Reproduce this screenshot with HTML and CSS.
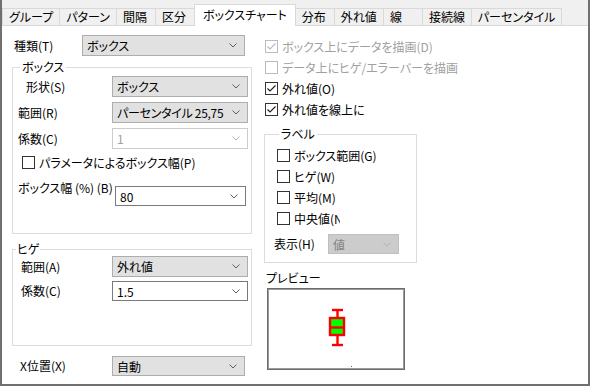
FILE: index.html
```html
<!DOCTYPE html>
<html lang="ja">
<head>
    <meta charset="UTF-8">
    <title>ボックスチャート</title>
    <link rel="stylesheet" href="styles.css">
</head>
<body>
<div class="window">
    <div class="tabs">
        <div class="tab">グループ</div>
        <div class="tab">パターン</div>
        <div class="tab">間隔</div>
        <div class="tab">区分</div>
        <div class="tab active">ボックスチャート</div>
        <div class="tab">分布</div>
        <div class="tab">外れ値</div>
        <div class="tab">線</div>
        <div class="tab">接続線</div>
        <div class="tab">パーセンタイル</div>
    </div>
    <div class="panel">
        <div class="col-left">
            <div class="row row-kind">
                <span class="label label-kind">種類(T)</span>
                <div class="combo combo-kind">
                    <span>ボックス</span>
                    <svg class="chev" width="8" height="5" viewBox="0 0 8 5"><path d="M0.5 0.5 L4 4 L7.5 0.5"/></svg>
                </div>
            </div>

            <fieldset class="group group-box">
                <legend>ボックス</legend>
                <div class="row first">
                    <span class="label label-box indent">形状(S)</span>
                    <div class="combo combo-wide">
                        <span>ボックス</span>
                        <svg class="chev" width="8" height="5" viewBox="0 0 8 5"><path d="M0.5 0.5 L4 4 L7.5 0.5"/></svg>
                    </div>
                </div>
                <div class="row">
                    <span class="label label-box">範囲(R)</span>
                    <div class="combo combo-wide">
                        <span class="narrow">パーセンタイル 25,75</span>
                        <svg class="chev" width="8" height="5" viewBox="0 0 8 5"><path d="M0.5 0.5 L4 4 L7.5 0.5"/></svg>
                    </div>
                </div>
                <div class="row">
                    <span class="label label-box">係数(C)</span>
                    <div class="combo combo-wide disabled-edit">
                        <span>1</span>
                        <svg class="chev" width="8" height="5" viewBox="0 0 8 5"><path d="M0.5 0.5 L4 4 L7.5 0.5"/></svg>
                    </div>
                </div>
                <div class="check-row check-param">
                    <span class="check"></span>
                    <span>パラメータによるボックス幅(P)</span>
                </div>
                <div class="row row-width">
                    <span class="label label-width">ボックス幅 (%) (B)</span>
                    <div class="combo edit combo-width">
                        <span>80</span>
                        <svg class="chev" width="8" height="5" viewBox="0 0 8 5"><path d="M0.5 0.5 L4 4 L7.5 0.5"/></svg>
                    </div>
                </div>
            </fieldset>

            <fieldset class="group group-whisker">
                <legend>ヒゲ</legend>
                <div class="row first">
                    <span class="label label-whisker">範囲(A)</span>
                    <div class="combo combo-wide">
                        <span>外れ値</span>
                        <svg class="chev" width="8" height="5" viewBox="0 0 8 5"><path d="M0.5 0.5 L4 4 L7.5 0.5"/></svg>
                    </div>
                </div>
                <div class="row row-coef">
                    <span class="label label-whisker">係数(C)</span>
                    <div class="combo edit combo-wide">
                        <span>1.5</span>
                        <svg class="chev" width="8" height="5" viewBox="0 0 8 5"><path d="M0.5 0.5 L4 4 L7.5 0.5"/></svg>
                    </div>
                </div>
            </fieldset>

            <div class="row row-xpos">
                <span class="label label-xpos">X位置(X)</span>
                <div class="combo combo-xpos">
                    <span>自動</span>
                    <svg class="chev" width="8" height="5" viewBox="0 0 8 5"><path d="M0.5 0.5 L4 4 L7.5 0.5"/></svg>
                </div>
            </div>
        </div>

        <div class="col-right">
            <div class="check-row tall disabled">
                <span class="check">
                    <svg width="11" height="11" viewBox="0 0 11 11"><path d="M1.5 5.5 L4 8 L9.5 2.5"/></svg>
                </span>
                <span>ボックス上にデータを描画(D)</span>
            </div>
            <div class="check-row tall disabled">
                <span class="check"></span>
                <span>データ上にヒゲ/エラーバーを描画</span>
            </div>
            <div class="check-row tall">
                <span class="check">
                    <svg width="11" height="11" viewBox="0 0 11 11"><path d="M1.5 5.5 L4 8 L9.5 2.5"/></svg>
                </span>
                <span>外れ値(O)</span>
            </div>
            <div class="check-row tall">
                <span class="check">
                    <svg width="11" height="11" viewBox="0 0 11 11"><path d="M1.5 5.5 L4 8 L9.5 2.5"/></svg>
                </span>
                <span>外れ値を線上に</span>
            </div>

            <fieldset class="group group-label">
                <legend>ラベル</legend>
                <div class="check-row tall first">
                    <span class="check"></span>
                    <span>ボックス範囲(G)</span>
                </div>
                <div class="check-row tall">
                    <span class="check"></span>
                    <span>ヒゲ(W)</span>
                </div>
                <div class="check-row tall">
                    <span class="check"></span>
                    <span>平均(M)</span>
                </div>
                <div class="check-row tall">
                    <span class="check"></span>
                    <span class="clip">中央値(N)</span>
                </div>
                <div class="row row-show">
                    <span class="label label-show">表示(H)</span>
                    <div class="combo combo-show disabled-list">
                        <span>値</span>
                        <svg class="chev" width="8" height="5" viewBox="0 0 8 5"><path d="M0.5 0.5 L4 4 L7.5 0.5"/></svg>
                    </div>
                </div>
            </fieldset>

            <div class="preview-title">プレビュー</div>
            <div class="preview">
                <svg width="136" height="80" viewBox="0 0 136 80">
                    <g stroke="#ff0000" stroke-width="2.4" fill="none">
                        <line x1="64" y1="21" x2="75" y2="21"/>
                        <line x1="69.5" y1="21" x2="69.5" y2="29"/>
                        <line x1="69.5" y1="46" x2="69.5" y2="56"/>
                        <line x1="64" y1="56" x2="75" y2="56"/>
                    </g>
                    <rect x="62" y="29" width="14" height="17" fill="#00ff00" stroke="#ff0000" stroke-width="2.4"/>
                    <line x1="62" y1="38.5" x2="76" y2="38.5" stroke="#ff0000" stroke-width="2.4"/>
                    <rect x="83" y="77" width="1" height="1" fill="#00a000"/>
                </svg>
            </div>
        </div>
    </div>
</div>
</body>
</html>
```

FILE: styles.css
```css
body {
    margin: 0;
    font-family: "Noto Sans CJK JP", "Noto Sans", sans-serif;
    font-size: 12px;
    color: #000;
    background: #fff;
    font-feature-settings: "palt";
}
.window {
    width: 590px;
    height: 386px;
    box-sizing: border-box;
    border: 2px solid #707070;
    border-top: none;
    background: #f0f0f0;
}
.tabs {
    display: flex;
    align-items: flex-end;
    height: 25px;
}
.tab {
    height: 17px;
    box-sizing: border-box;
    min-width: 40px;
    padding: 0 6px;
    margin-right: -1px;
    border: 1px solid #d9d9d9;
    border-bottom: none;
    background: #f0f0f0;
    line-height: 16px;
}
.tab.active {
    position: relative;
    z-index: 1;
    height: 22px;
    margin-bottom: -1px;
    padding: 0 8px;
    background: #fff;
    line-height: 20px;
}
.panel {
    display: flex;
    height: 359px;
    box-sizing: border-box;
    border-top: 1px solid #d9d9d9;
    background: #fff;
}
.col-left {
    width: 240px;
    margin-left: 10px;
}
.col-right {
    width: 153px;
    margin-left: 12px;
}
.row {
    display: flex;
    align-items: center;
    margin-top: 5px;
}
.label {
    flex: none;
    line-height: 16px;
    white-space: nowrap;
}
.row-kind { margin-top: 9px; }
.label-kind { width: 68px; margin-left: 2px; }
.label-box { width: 94px; }
.label-box.indent { width: 86px; padding-left: 8px; }
.label-width { width: 97px; }
.label-whisker { width: 91px; }
.label-xpos { width: 92px; margin-left: 8px; }
.label-show { width: 54px; margin-left: -3px; }

.combo {
    display: flex;
    align-items: center;
    justify-content: space-between;
    height: 21px;
    box-sizing: border-box;
    padding: 0 7px 0 4px;
    border: 1px solid #adadad;
    background: #e1e1e1;
    white-space: nowrap;
}
.combo.edit {
    height: 20px;
    border-color: #7a7a7a;
    background: #fff;
}
.combo.disabled-edit {
    border-color: #cccccc;
    background: #fff;
    color: #a0a0a0;
}
.combo.disabled-list {
    height: 20px;
    border-color: #bfbfbf;
    background: #cccccc;
    color: #838383;
}
.chev {
    flex: none;
}
.chev path {
    fill: none;
    stroke: #606060;
    stroke-width: 1;
}
.disabled-edit .chev path,
.disabled-list .chev path {
    stroke: #b0b0b0;
}
.combo-kind { width: 163px; }
.combo-wide { width: 136px; }
.combo-width { width: 131px; }
.combo-xpos { width: 133px; }
.combo-show { width: 71px; }
.narrow { letter-spacing: -0.3px; }

.group {
    margin: 0;
    padding: 0 0 0 5px;
    min-width: 0;
    border: 1px solid #dcdcdc;
}
.group legend {
    padding: 0 2px;
    line-height: 14px;
}
.group-box {
    width: 240px;
    box-sizing: border-box;
    margin-top: 4px;
    padding-bottom: 27px;
}
.group-box legend { margin-left: 2px; }
.group-box .row.first { margin-top: 2px; }
.check-param { margin-top: 5px; padding-left: 4px; }
.row-width {
    align-items: flex-start;
    margin-top: 10px;
}
.row-width .combo { margin-top: 6px; }

.group-whisker {
    width: 240px;
    box-sizing: border-box;
    margin-top: 8px;
    padding-left: 8px;
    padding-bottom: 44px;
}
.group-whisker legend { margin-left: -5px; padding: 0 1px; }
.group-whisker .row.first { margin-top: 0; }
.row-coef { margin-top: 4px; }
.row-xpos { margin-top: 10px; }
.row-xpos .combo { height: 20px; }

.check-row {
    display: flex;
    align-items: center;
    height: 16px;
    white-space: nowrap;
}
.check-row.tall { height: 21px; }
.check {
    flex: none;
    width: 13px;
    height: 13px;
    box-sizing: border-box;
    margin-right: 4px;
    border: 1px solid #333;
    background: #fff;
}
.check svg {
    display: block;
}
.check path {
    fill: none;
    stroke: #222;
    stroke-width: 1.2;
}
.check-row.disabled { color: #a0a0a0; }
.check-row.disabled .check { border-color: #bcbcbc; }
.check-row.disabled .check path { stroke: #bcbcbc; }

.col-right > .check-row:first-child { margin-top: 10px; margin-left: 1px; }
.col-right > .check-row { margin-left: 1px; }

.group-label {
    width: 153px;
    box-sizing: border-box;
    margin-top: 7px;
    padding-left: 12px;
    padding-bottom: 8px;
}
.group-label legend { margin-left: 2px; }
.group-label .check-row.first { margin-top: 4px; }
.clip {
    display: inline-block;
    width: 46px;
    overflow: hidden;
}
.row-show { margin-top: 5px; }

.preview-title {
    margin-top: 7px;
    margin-left: 2px;
    line-height: 16px;
}
.preview {
    width: 138px;
    height: 82px;
    box-sizing: border-box;
    margin-top: 2px;
    margin-left: 3px;
    border: 1px solid #6d6d6d;
    outline: 1px solid #9a9a9a;
    outline-offset: -2px;
}
.preview svg {
    display: block;
}
```
